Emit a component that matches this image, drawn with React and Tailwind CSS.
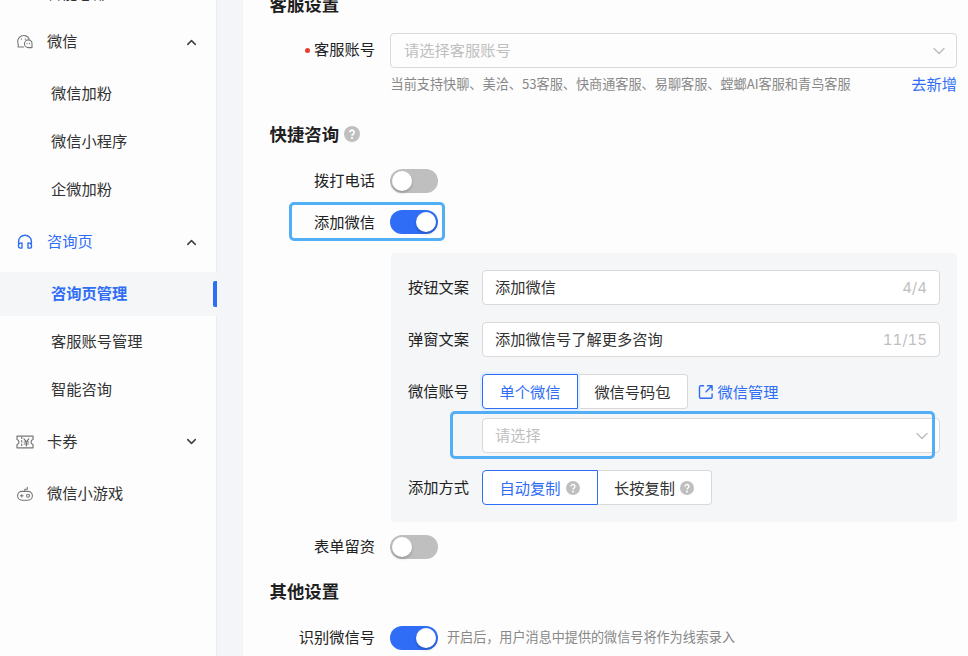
import { ChevronDown, ChevronUp } from 'lucide-react'

const stroke = { fill: 'none', stroke: 'currentColor', strokeLinecap: 'round', strokeLinejoin: 'round' }

function WechatIcon() {
  return (
    <svg width="18" height="18" viewBox="0 0 18 18" {...stroke} strokeWidth="1.1">
      <path d="M7.6 14H2.2v-3.1A6 6 0 1 1 13.3 6.1" />
      <path d="M12.3 6.9a3.7 3.7 0 0 1 3.7 3.7v4h-3.7a3.85 3.85 0 1 1 0-7.7z" />
      <path d="M5.4 5.8v.5M9.3 5.8v.5M11 10.2v.4M13.6 10.2v.4" />
    </svg>
  )
}

function HeadsetIcon() {
  return (
    <svg width="18" height="18" viewBox="0 0 18 18" {...stroke} strokeWidth="1.4">
      <path d="M2.6 11V8.6a6.3 6.3 0 0 1 12.8 0V11" />
      <path d="M6 9.9v5.2H4.4a1.9 1.9 0 0 1-1.9-1.9v-.6c0-1.6 1.3-2.7 3.5-2.7zM12 9.9v5.2h1.6a1.9 1.9 0 0 0 1.9-1.9v-.6c0-1.6-1.3-2.7-3.5-2.7z" />
    </svg>
  )
}

function CouponIcon() {
  return (
    <svg width="18" height="18" viewBox="0 0 18 18" {...stroke} strokeWidth="1.2">
      <path d="M1 3.2h16v3.3c-2.6.6-2.6 4.4 0 5v3.3H1v-3.3c2.6-.6 2.6-4.4 0-5z" />
      <path d="M5.7 4v10" strokeDasharray="1.5 2" />
      <path d="M8 5.8l2.4 3 2.4-3M8.2 9h4.4M8.2 11h4.4M10.4 9v4" />
    </svg>
  )
}

function GameIcon() {
  return (
    <svg width="18" height="18" viewBox="0 0 18 18" {...stroke} strokeWidth="1.1">
      <rect x="1.6" y="6.4" width="14.8" height="8.8" rx="4.4" />
      <path d="M8.8 6.2V4.2h2.5V2.2M4.5 10.8h2.6M5.8 9.5v2.6" />
      <circle cx="12" cy="10.8" r="1.5" />
    </svg>
  )
}

function ExternalIcon() {
  return (
    <svg width="16" height="16" viewBox="0 0 16 16" {...stroke} strokeWidth="1.4">
      <path d="M5.5 1.7H2.9a1.4 1.4 0 0 0-1.4 1.4v9.8a1.4 1.4 0 0 0 1.4 1.4h9.8a1.4 1.4 0 0 0 1.4-1.4V10" />
      <path d="M9.5 1.7h4.6v4.6M14 1.8L8 7.8" />
    </svg>
  )
}

function Help({ large }) {
  return (
    <svg className={large ? 'size-[16px]' : 'size-[14px]'} viewBox="0 0 16 16">
      <circle cx="8" cy="8" r="8" fill="#bfbfbf" />
      <path d="M5.8 6.3a2.2 2.2 0 1 1 3.3 1.9c-.8.5-1.1.8-1.1 1.5" fill="none" stroke="#fff" strokeWidth="1.7" />
      <circle cx="8" cy="11.9" r="1.1" fill="#fff" />
    </svg>
  )
}

function Switch({ on }) {
  return (
    <span className={`flex h-6 w-12 shrink-0 items-center rounded-full px-[2px] ${on ? 'justify-end bg-[#2f6df6]' : 'bg-[#bfbfbf]'}`}>
      <span className="size-5 rounded-full bg-white shadow-[0_2px_3px_rgba(0,0,0,0.2)]" />
    </span>
  )
}

function Group({ icon, label, arrow, active }) {
  return (
    <div className={`flex h-12 items-center pl-4 pr-[17px] ${active ? 'text-[#2f6df6]' : 'text-[#333]'}`}>
      <span className={active ? '' : 'text-[#777]'}>{icon}</span>
      <span className="ml-[13px] flex-1 pb-[4px]">{label}</span>
      {arrow === 'up' && <ChevronUp size={15} strokeWidth={2.5} className="text-[#444]" />}
      {arrow === 'down' && <ChevronDown size={15} strokeWidth={2.5} className="-mt-[2px] text-[#444]" />}
    </div>
  )
}

function SubItem({ label }) {
  return <div className="flex h-12 items-center pb-[4px] pl-[51px]">{label}</div>
}

function Field({ label, className = '', children }) {
  return (
    <div className={`flex items-center ${className}`}>
      <span className="w-[78px] shrink-0 pb-[3px] text-right text-[#222]">{label}</span>
      {children}
    </div>
  )
}

function TextInput({ value, count }) {
  return (
    <div className="ml-[13px] flex h-[35px] w-[458px] items-center justify-between rounded-[4px] border border-[#d9d9d9] bg-white px-3 text-[#333]">
      <span className="pb-[3px]">{value}</span>
      <span className="font-['Inter','Noto_Sans_CJK_SC',sans-serif] text-[15px] tabular-nums text-[#bfbfbf]">{count}</span>
    </div>
  )
}

function Sidebar() {
  return (
    <nav className="h-full w-[217px] shrink-0 border-r border-[#ececee] bg-[#fdfdfd] text-[#333]">
      <div className="-mt-[30px] flex h-12 items-center pb-[5px] pl-[47px]">智能总部</div>
      <Group icon={<WechatIcon />} label="微信" arrow="up" />
      <div className="mt-1">
        <SubItem label="微信加粉" />
        <SubItem label="微信小程序" />
        <SubItem label="企微加粉" />
      </div>
      <div className="mt-1">
        <Group icon={<HeadsetIcon />} label="咨询页" arrow="up" active />
      </div>
      <div className="-mr-px mt-[6px] flex h-[44px] items-center justify-between bg-[#f4f6f8] pl-[51px] font-bold text-[#2f6df6]">
        <span className="pb-[4px]">咨询页管理</span>
        <span className="h-[26px] w-[4px] rounded-l-[2px] bg-[#2f6df6]" />
      </div>
      <div className="mt-[2px]">
        <SubItem label="客服账号管理" />
        <SubItem label="智能咨询" />
      </div>
      <div className="mt-1 flex flex-col gap-1">
        <Group icon={<CouponIcon />} label="卡券" arrow="down" />
        <Group icon={<GameIcon />} label="微信小游戏" />
      </div>
    </nav>
  )
}

function WechatPanel() {
  return (
    <div className="ml-[148px] mt-3 h-[269px] w-[566px] rounded-[4px] bg-[#f4f6f8] pt-[17px]">
      <Field label="按钮文案">
        <TextInput value="添加微信" count="4/4" />
      </Field>
      <Field label="弹窗文案" className="mt-[17px]">
        <TextInput value="添加微信号了解更多咨询" count="11/15" />
      </Field>
      <Field label="微信账号" className="mt-[17px]">
        <div className="ml-[13px] flex h-[35px]">
          <div className="z-10 flex w-24 items-center justify-center rounded-l-[4px] border border-[#2f6df6] bg-white pb-[2px] text-[#2f6df6] shadow-[0_0_0_2px_#e2efff]">单个微信</div>
          <div className="flex w-[110px] items-center justify-center rounded-r-[4px] border border-l-0 border-[#d9d9d9] bg-white pb-[2px] text-[#333]">微信号码包</div>
        </div>
        <span className="ml-[9.5px] flex items-center gap-1 text-[#2f6df6]">
          <ExternalIcon />
          <span className="pb-[2px]">微信管理</span>
        </span>
      </Field>
      <div className="relative mt-[9px] pl-[91px]">
        <div className="flex h-[35px] w-[458px] items-center justify-between rounded-[4px] border border-[#d9d9d9] bg-white pl-3 pr-[7px] text-[#bfbfbf]">
          <span className="pb-[3px]">请选择</span>
          <ChevronDown size={20} strokeWidth={1.7} />
        </div>
        <div className="absolute -top-[7px] left-[59px] h-[48px] w-[485px] rounded-[5px] border-[3px] border-[#52aef5]" />
      </div>
      <Field label="添加方式" className="mt-[17px]">
        <div className="ml-[13px] flex h-[35px]">
          <div className="flex w-[116px] items-center justify-center gap-[5px] rounded-l-[4px] border border-[#2f6df6] bg-white pr-px text-[#2f6df6]">
            <span className="pb-[2px]">自动复制</span>
            <Help />
          </div>
          <div className="flex w-[114px] items-center justify-center gap-[5px] rounded-r-[4px] border border-l-0 border-[#d9d9d9] bg-white pr-px text-[#333]">
            <span className="pb-[2px]">长按复制</span>
            <Help />
          </div>
        </div>
      </Field>
    </div>
  )
}

function Row({ label, required, className = '', children }) {
  return (
    <div className={`flex items-center ${className}`}>
      <span className="flex w-[132px] shrink-0 items-center justify-end gap-1 text-[#222]">
        {required && <span className="size-[5px] rounded-full bg-[#e93b2f]" />}
        <span className="pb-[4px] leading-[23px]">{label}</span>
      </span>
      <div className="ml-[15px] flex items-center">{children}</div>
    </div>
  )
}

function Heading({ children }) {
  return <h2 className="flex h-6 items-center gap-[5px] pl-[26.5px] text-[17.4px] font-bold text-[#1f1f1f]">{children}</h2>
}

export default function App() {
  return (
    <div className="flex h-[656px] w-[968px] overflow-hidden bg-[#f3f5f8] font-['Noto_Sans_CJK_SC',sans-serif] text-[15.25px] leading-6">
      <Sidebar />
      <main className="ml-[26px] h-full flex-1 bg-[#fdfdfd]">
        <div className="-mt-2">
          <Heading>客服设置</Heading>
        </div>
        <Row label="客服账号" required className="mt-[17px]">
          <div className="flex h-[35px] w-[567px] items-center justify-between rounded-[4px] border border-[#d9d9d9] pl-[13px] pr-[7px] text-[#bfbfbf]">
            <span className="pb-[4px]">请选择客服账号</span>
            <ChevronDown size={20} strokeWidth={1.7} />
          </div>
        </Row>
        <div className="ml-[147.5px] mt-[5px] flex h-6 w-[566.5px] items-center justify-between">
          <span className="whitespace-nowrap pb-[2px] text-[13.15px] text-[#888]">当前支持快聊、美洽、53客服、快商通客服、易聊客服、螳螂AI客服和青鸟客服</span>
          <span className="pb-[4px] text-[#2f6df6]">去新增</span>
        </div>
        <div className="mt-[25px]">
          <Heading>
            快捷咨询
            <Help large />
          </Heading>
        </div>
        <Row label="拨打电话" className="mt-[21.5px]">
          <Switch />
        </Row>
        <div className="ml-[46px] mt-[7.5px] flex h-[39px] w-[156px] items-center justify-end rounded-[5px] border-[3px] border-[#52aef5] pr-[4px]">
          <span className="mr-[15px] pb-[2px] text-[#222]">添加微信</span>
          <Switch on />
        </div>
        <WechatPanel />
        <Row label="表单留资" className="mt-[11.5px]">
          <Switch />
        </Row>
        <div className="mt-[18.5px]">
          <Heading>其他设置</Heading>
        </div>
        <Row label="识别微信号" className="mt-[21.5px]">
          <Switch on />
          <span className="ml-[9px] pb-[2px] text-[13.1px] leading-5 text-[#888]">开启后，用户消息中提供的微信号将作为线索录入</span>
        </Row>
      </main>
    </div>
  )
}
